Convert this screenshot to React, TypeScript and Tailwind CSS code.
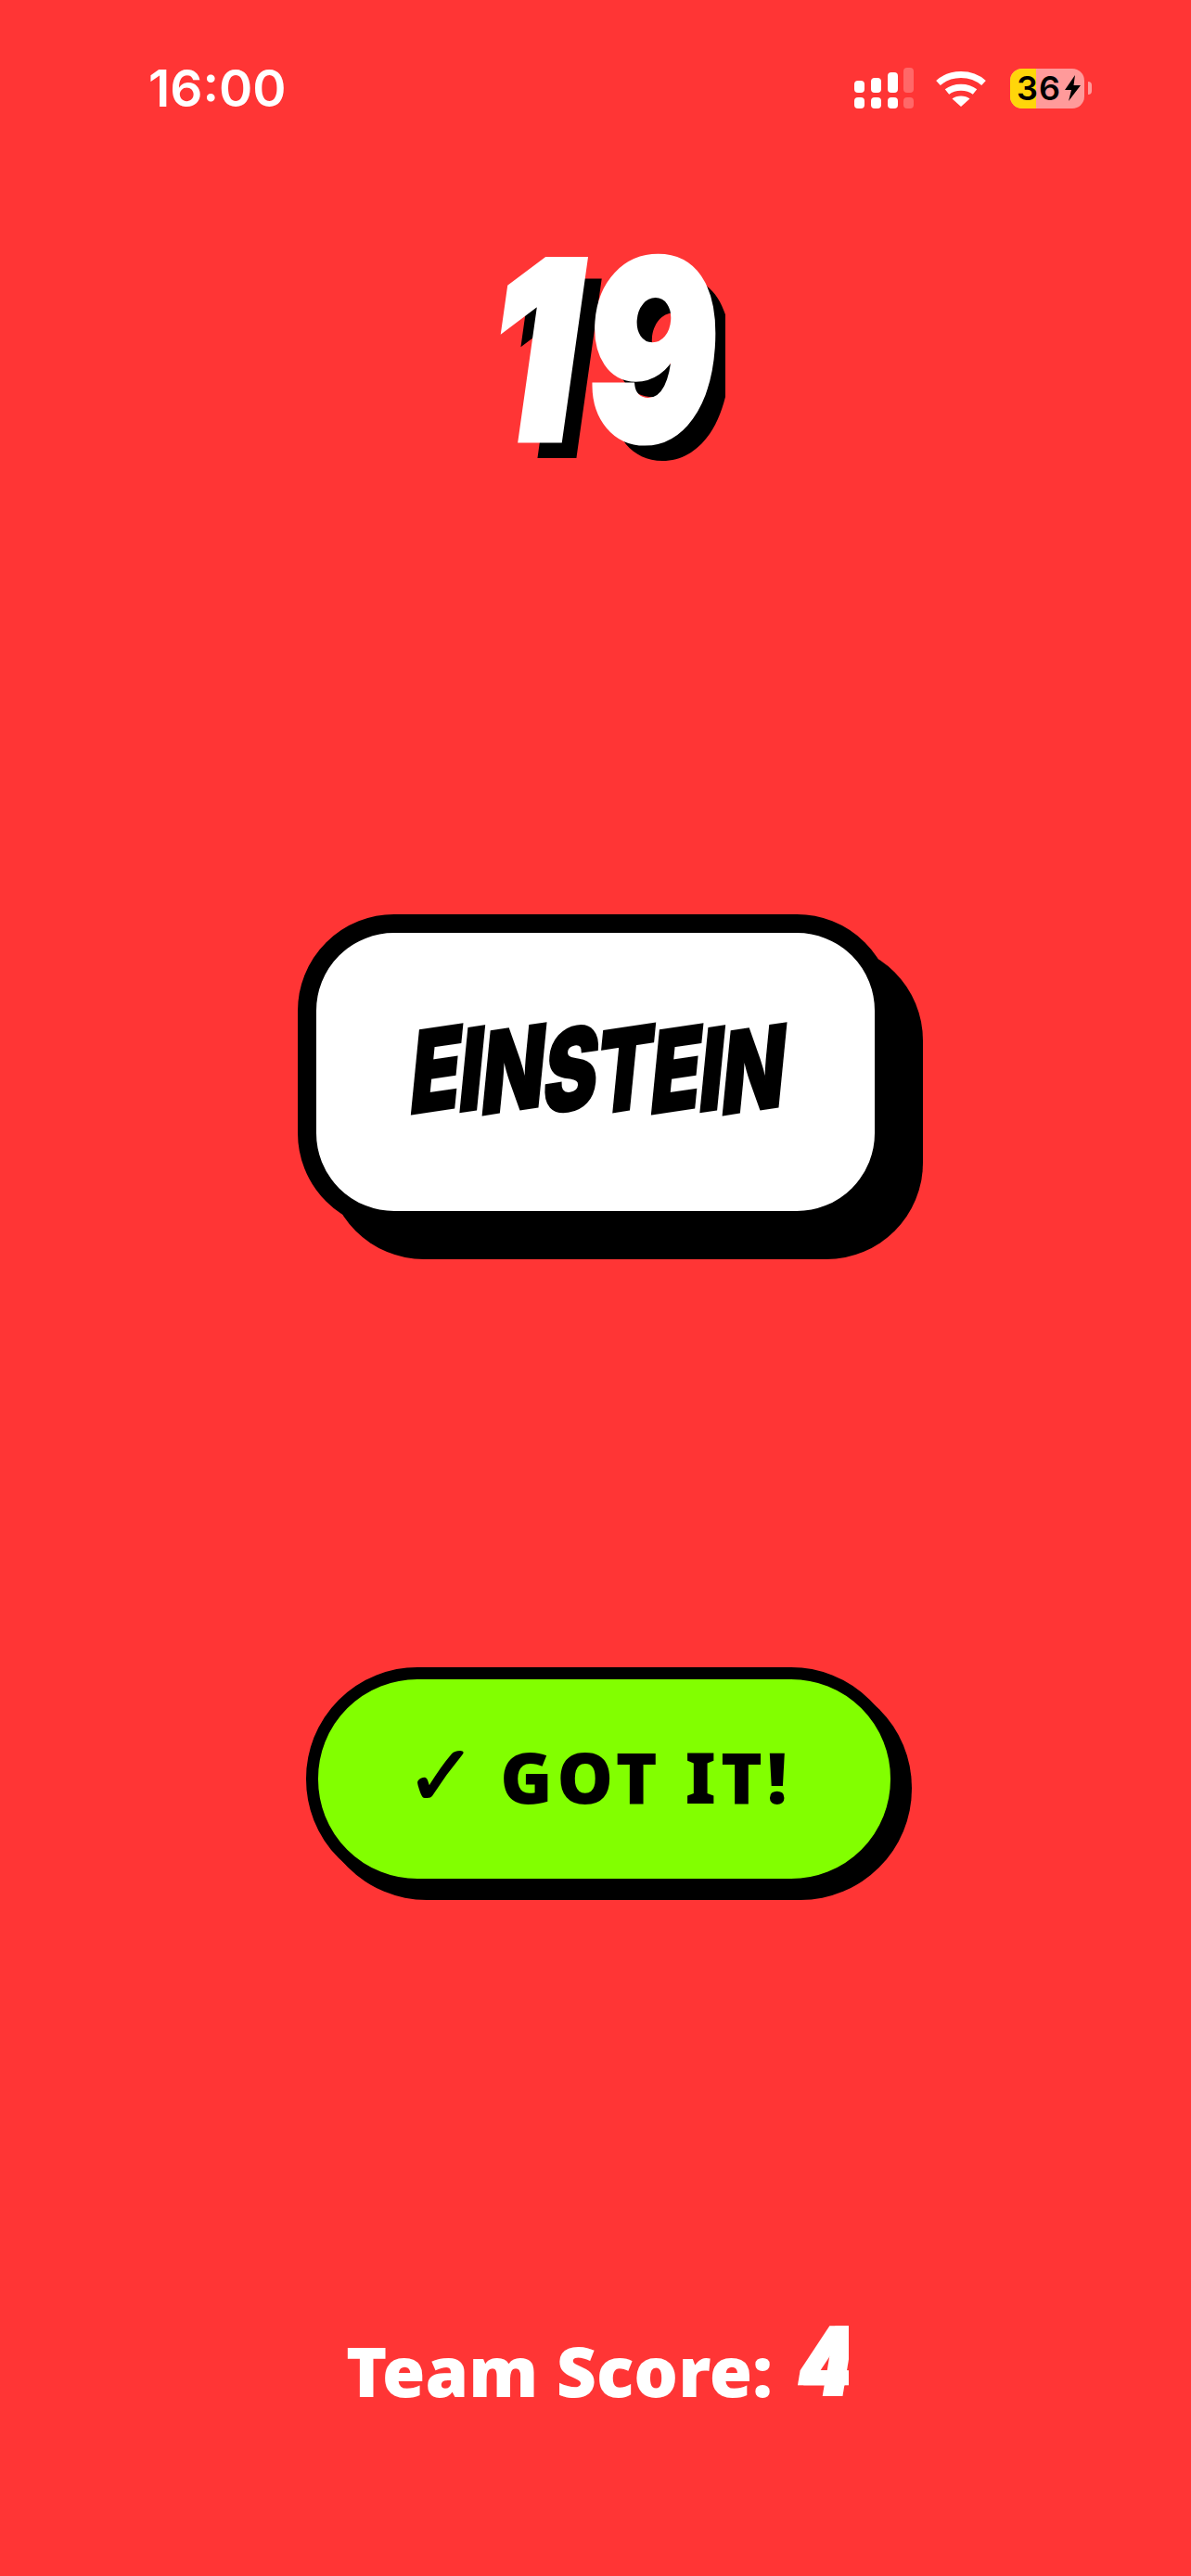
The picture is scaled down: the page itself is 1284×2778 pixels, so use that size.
// Charades round screen: timer, current word, got-it button and team score.

const WORD = "EINSTEIN".split("");

const comic = { fontFamily: "Inter, 'Liberation Sans', sans-serif" };

function SignalIcon() {
  const columns = [
    { x: 0, top: 14, opacity: 1 },
    { x: 18, top: 11, opacity: 1 },
    { x: 36, top: 5, opacity: 1 },
    { x: 53, top: 0, opacity: 0.25 },
  ];
  return (
    <svg width="65" height="44" viewBox="0 0 65 44" fill="#fff" aria-hidden>
      {columns.map((c) => (
        <g key={c.x} opacity={c.opacity}>
          <rect x={c.x} y={c.top} width="11" height={27 - c.top} rx="4" />
          <rect x={c.x} y="32" width="11" height="12" rx="4" />
        </g>
      ))}
    </svg>
  );
}

function WifiIcon() {
  return (
    <svg width="54" height="39" viewBox="0 0 54 39" fill="none" stroke="#fff" strokeWidth="7" aria-hidden>
      <path d="M2.5 13.5 C16 1.5 38 1.5 51.5 13.5" />
      <path d="M12 23 C20 16.5 34 16.5 42 23" />
      <path d="M27 39 L17.5 30.5 C22 26.5 32 26.5 36.5 30.5 Z" fill="#fff" stroke="none" />
    </svg>
  );
}

function BatteryIcon() {
  return (
    <div className="ml-[3px] flex items-center gap-[4px]">
      <div className="relative flex h-[43px] w-[80px] items-center overflow-hidden rounded-[13px] bg-[#ff9a9a]">
        <div className="h-full w-[28px] bg-[#ffd60a]" />
        <div className="absolute inset-0 flex items-center pl-[7px]">
          <span className="font-['Inter',sans-serif] text-[36px] leading-none font-semibold tracking-[1px] text-black">36</span>
          <svg className="ml-[3px]" width="19" height="28" viewBox="0 0 19 28" fill="#000" aria-hidden>
            <path d="M12 0 L1 16 H8 L5 28 L18 11 H10.5 Z" />
          </svg>
        </div>
      </div>
      <div className="h-[14px] w-[4px] rounded-r-full bg-[#ff9a9a]" />
    </div>
  );
}

function StatusBar() {
  return (
    <div className="flex h-[82px] items-center justify-between pr-[107px] pl-[160px]">
      <span className="font-['Inter',sans-serif] text-[55px] leading-none font-semibold text-white">16:00</span>
      <div className="flex items-center gap-[23px]">
        <SignalIcon />
        <WifiIcon />
        <BatteryIcon />
      </div>
    </div>
  );
}

export default function App() {
  return (
    <div className="flex h-[2778px] w-[1284px] flex-col overflow-hidden bg-[#ff3535]">
      <div className="h-[54px]" />
      <StatusBar />

      {/* Countdown: the shadow is cut off on the right, as in the app */}
      <div className="mt-[116px] ml-[520px] flex h-[250px] w-[262px] self-start overflow-hidden text-[266px] leading-[250px] font-black text-white [-webkit-text-stroke:7px_#fff]">
        <span style={comic} className="-ml-[2px] flex w-[122px] scale-x-[0.8] -skew-x-[10deg] justify-center [text-shadow:26px_20px_0_#000]">
          1
        </span>
        <span style={comic} className="ml-[2px] flex w-[126px] scale-x-[0.78] -skew-x-[5deg] justify-center [text-shadow:26px_20px_0_#000]">
          9
        </span>
      </div>

      {/* Current word */}
      <div className="mt-[484px] ml-[321px] flex h-[340px] w-[642px] items-center justify-center self-start rounded-[104px] border-[20px] border-black bg-white pb-[6px] pl-[6px] shadow-[32px_32px_0_#000]">
        <div style={comic} className="flex scale-x-[0.7] -skew-x-[8deg] text-[124px] leading-none font-black tracking-[-1px] whitespace-nowrap text-black [-webkit-text-stroke:2px_#000]">
          {WORD.map((letter, i) => (
            <span key={i} className="inline-block -skew-y-[6deg]">
              {letter}
            </span>
          ))}
        </div>
      </div>

      {/* Confirm button */}
      <div className="mt-[472px] ml-[330px] flex h-[241px] w-[643px] items-center justify-center self-start rounded-[120px] border-[13px] border-black bg-[#82ff00] pr-[12px] pb-[6px] shadow-[10px_10px_0_#000]">
        <span className="flex items-center font-['Noto_Sans','DejaVu_Sans',sans-serif] text-[76px] leading-none font-black tracking-[5px] text-black">
          <span className="mr-[20px] font-['DejaVu_Sans',sans-serif] text-[92px] [-webkit-text-stroke:2px_#000]">✓</span>
          GOT IT!
        </span>
      </div>

      {/* Score */}
      <div className="mt-[466px] ml-[373px] flex items-end self-start">
        <span className="font-['Noto_Sans',sans-serif] text-[75px] leading-none font-black text-white">Team Score:</span>
        <div className="relative mb-[7px] ml-[24px] h-[82px] w-[58px] overflow-hidden">
          <span
            style={comic}
            className="absolute top-0 left-[4px] block origin-left scale-x-[0.78] -skew-x-[12deg] text-[104px] leading-[82px] font-black text-white [text-shadow:8px_0_0_#fff]"
          >
            4
          </span>
        </div>
      </div>
    </div>
  );
}
